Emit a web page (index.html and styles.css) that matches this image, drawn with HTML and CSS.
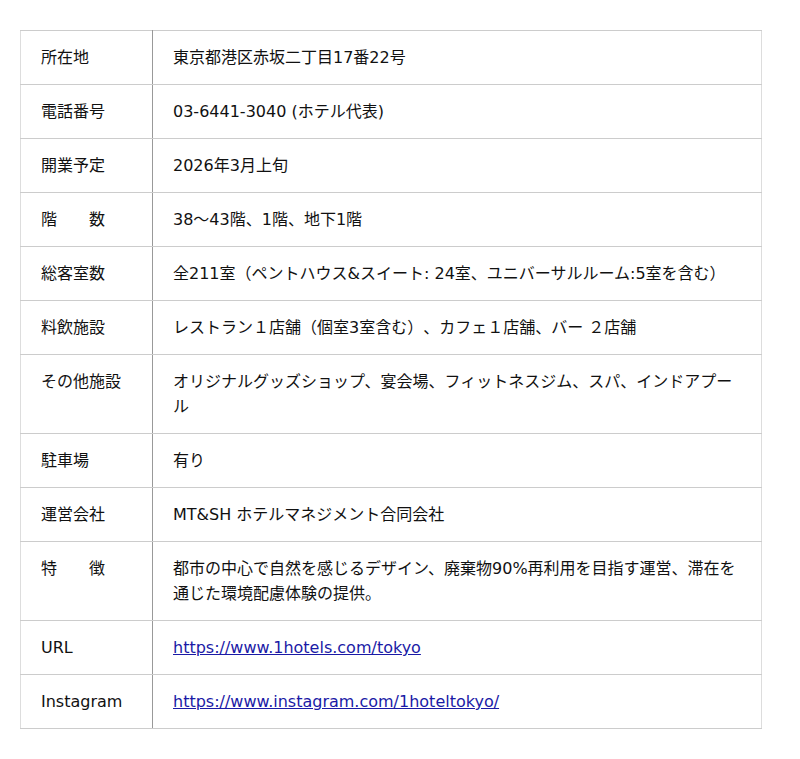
FILE: index.html
```html
<!DOCTYPE html>
<html lang="ja">
<head>
<meta charset="utf-8">
<link rel="stylesheet" href="styles.css">
</head>
<body>
<table class="info">
<tr><th>所在地</th><td>東京都港区赤坂二丁目17番22号</td></tr>
<tr><th>電話番号</th><td>03-6441-3040 (ホテル代表)</td></tr>
<tr><th>開業予定</th><td>2026年3月上旬</td></tr>
<tr><th>階　　数</th><td>38～43階、1階、地下1階</td></tr>
<tr><th>総客室数</th><td>全211室（ペントハウス&amp;スイート: 24室、ユニバーサルルーム:5室を含む）</td></tr>
<tr><th>料飲施設</th><td>レストラン１店舗（個室3室含む）、カフェ１店舗、バー ２店舗</td></tr>
<tr><th>その他施設</th><td>オリジナルグッズショップ、宴会場、フィットネスジム、スパ、インドアプール</td></tr>
<tr><th>駐車場</th><td>有り</td></tr>
<tr><th>運営会社</th><td>MT&amp;SH ホテルマネジメント合同会社</td></tr>
<tr><th>特　　徴</th><td>都市の中心で自然を感じるデザイン、廃棄物90%再利用を目指す運営、滞在を通じた環境配慮体験の提供。</td></tr>
<tr><th>URL</th><td><a href="#">https://www.1hotels.com/tokyo</a></td></tr>
<tr><th>Instagram</th><td><a href="#">https://www.instagram.com/1hoteltokyo/</a></td></tr>
</table>
</body>
</html>
```
FILE: styles.css
```css
html, body { margin: 0; padding: 0; background: #fff; }
body {
  padding: 30px 38px 30px 20px;
  font-family: "DejaVu Sans", "Noto Sans CJK JP", sans-serif;
  font-size: 16px;
  color: #111;
  text-spacing-trim: space-all;
}
.info {
  width: 742px;
  border-collapse: collapse;
  border: 1px solid #ddd;
}
.info th, .info td {
  text-align: left;
  vertical-align: top;
  font-weight: normal;
  line-height: 25px;
  padding: 14px 20px 14px 20px;
  border-top: 1px solid #ccc;
  border-bottom: 1px solid #ccc;
}
.info th {
  width: 91px;
  border-right: 1px solid #999;
}
.info a { color: #1a1aa6; text-decoration: underline; }
```
